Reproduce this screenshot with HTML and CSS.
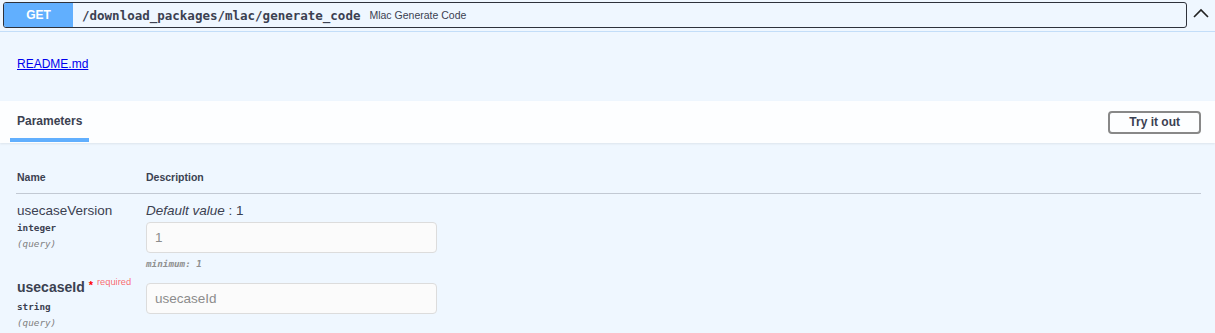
FILE: index.html
```html
<!DOCTYPE html>
<html lang="en">
<head>
    <meta charset="UTF-8">
    <meta name="viewport" content="width=device-width, initial-scale=1.0">
    <title>Mlac Generate Code</title>
    <link rel="stylesheet" href="styles.css">
</head>
<body>
    <div class="opblock">
        <!-- Summary bar -->
        <div class="summary">
            <button class="summary-control">
                <span class="method">GET</span>
                <span class="path">/download_packages/mlac/generate_code</span>
                <span class="summary-desc">Mlac Generate Code</span>
            </button>
            <button class="arrow" aria-label="Collapse">
                <svg width="16" height="10" viewBox="0 0 16 10">
                    <path d="M1 9 L8 2 L15 9" fill="none" stroke="#222" stroke-width="1.6"/>
                </svg>
            </button>
        </div>

        <div class="opblock-body">
            <div class="description">
                <a href="#">README.md</a>
            </div>

            <!-- Parameters header -->
            <div class="section-header">
                <div class="tab">Parameters</div>
                <button class="try-out">Try it out</button>
            </div>

            <div class="param-table">
                <div class="param-head">
                    <div class="col-name">Name</div>
                    <div class="col-desc">Description</div>
                </div>

                <div class="param-row">
                    <div class="col-name">
                        <div class="param-name">usecaseVersion</div>
                        <div class="param-type">integer</div>
                        <div class="param-in">(query)</div>
                    </div>
                    <div class="col-desc">
                        <div class="default-value"><i>Default value</i> : 1</div>
                        <input class="param-input" type="text" placeholder="1">
                        <div class="param-note">minimum: 1</div>
                    </div>
                </div>

                <div class="param-row">
                    <div class="col-name">
                        <div class="param-name required">usecaseId<span class="star">*</span><span class="req-label">required</span></div>
                        <div class="param-type">string</div>
                        <div class="param-in">(query)</div>
                    </div>
                    <div class="col-desc">
                        <input class="param-input" type="text" placeholder="usecaseId">
                    </div>
                </div>
            </div>
        </div>
    </div>
</body>
</html>
```

FILE: styles.css
```css
/* Base styles */
body {
    margin: 0;
    background: #eff7ff;
    color: #3b4151;
    font-family: "Liberation Sans", Arial, sans-serif;
}

button {
    font-family: inherit;
    cursor: pointer;
}

/* Summary bar */
.summary {
    display: flex;
    align-items: center;
    padding: 2px 0 3px 3px;
    border-bottom: 1px solid #c3def9;
}

.summary-control {
    display: flex;
    align-items: center;
    width: 1184px;
    height: 26px;
    padding: 0;
    background: transparent;
    border: 1px solid #2e323b;
    border-radius: 3px;
    text-align: left;
}

.method {
    width: 69px;
    height: 24px;
    line-height: 24px;
    background: #61affe;
    color: #fff;
    font-size: 12px;
    font-weight: bold;
    text-align: center;
    border-radius: 2px 0 0 2px;
}

.path {
    padding-left: 9px;
    font-family: "DejaVu Sans Mono", monospace;
    font-size: 12.5px;
    font-weight: bold;
    color: #3b4151;
}

.summary-desc {
    padding-left: 9px;
    font-size: 10.5px;
    color: #3b4151;
}

.arrow {
    display: flex;
    align-items: center;
    justify-content: center;
    width: 28px;
    height: 26px;
    padding: 0 0 4px 0;
    background: none;
    border: none;
}

/* Body */
.description {
    padding: 25px 17px 29px;
    font-size: 12px;
    line-height: 15px;
}

.description a {
    color: #0000ee;
}

.section-header {
    display: flex;
    justify-content: space-between;
    align-items: flex-start;
    height: 42px;
    padding: 0 14px 0 10px;
    background: rgba(255, 255, 255, 0.85);
    box-shadow: 0 1px 2px rgba(0, 0, 0, 0.08);
}

.tab {
    padding: 12px 7px 9px;
    line-height: 16px;
    font-size: 12px;
    font-weight: bold;
    border-bottom: 4px solid #61affe;
}

.try-out {
    align-self: center;
    height: 23px;
    padding: 0 19px;
    line-height: 15px;
    background: transparent;
    border: 2px solid #888;
    border-radius: 4px;
    color: #3b4151;
    font-size: 12px;
    font-weight: bold;
}

/* Parameters table */
.param-table {
    margin: 0 14px 0 16px;
}

.param-head {
    display: flex;
    padding: 28px 0 9px;
    line-height: 13px;
    font-size: 10.5px;
    font-weight: bold;
    border-bottom: 1px solid rgba(59, 65, 81, 0.25);
}

.param-row {
    display: flex;
    padding-top: 8px;
}

.col-name {
    width: 129px;
    padding-left: 1px;
    flex-shrink: 0;
}

.param-name {
    line-height: 17px;
    font-size: 13.5px;
}

.param-name.required {
    font-size: 14px;
    font-weight: bold;
}

.star {
    color: #f00;
    font-size: 11px;
    padding-left: 4px;
    position: relative;
    top: -3px;
}

.req-label {
    color: rgba(255, 0, 0, 0.6);
    font-size: 9.3px;
    font-weight: normal;
    padding-left: 4px;
    position: relative;
    top: -7px;
}

.param-type {
    margin-top: 1px;
    line-height: 16px;
    font-family: "DejaVu Sans Mono", monospace;
    font-size: 9.3px;
    font-weight: bold;
}

.param-in {
    line-height: 16px;
    font-family: "DejaVu Sans Mono", monospace;
    font-size: 9.3px;
    font-style: italic;
    color: #808080;
}

.default-value {
    line-height: 17px;
    font-size: 13.5px;
}

.param-input {
    display: block;
    box-sizing: border-box;
    width: 291px;
    height: 31px;
    margin-top: 3px;
    padding: 0 8px;
    background: #fbfbfb;
    border: 1px solid #dcdcdc;
    border-radius: 4px;
    font-family: inherit;
    font-size: 13.5px;
    color: #3b4151;
    outline: none;
}

.param-input::placeholder {
    color: #8c8c8c;
}

.col-desc > .param-input:first-child {
    margin-top: 4px;
}

.param-note {
    line-height: 14px;
    margin-top: 4px;
    font-family: "DejaVu Sans Mono", monospace;
    font-size: 9.3px;
    font-style: italic;
    font-weight: bold;
    color: #909090;
}
```
